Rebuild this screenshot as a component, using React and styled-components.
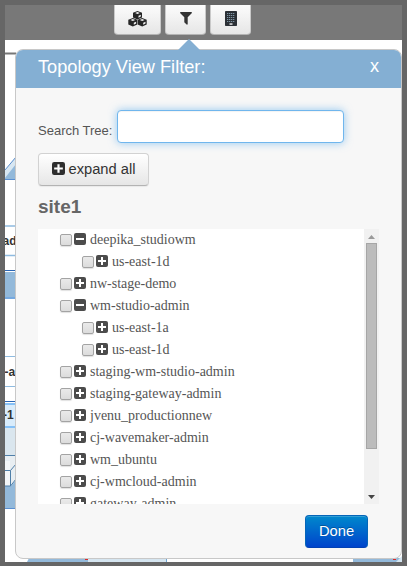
import React from 'react';
import styled, { createGlobalStyle, css } from 'styled-components';

const Global = createGlobalStyle`
  * { box-sizing: border-box; }
  body { margin: 0; font-family: "Liberation Sans", Arial, sans-serif; overflow: hidden; }
`;

const Frame = styled.div`
  position: relative;
  width: 407px;
  height: 566px;
  border: solid #666;
  border-width: 5px 5px 4px;
  background: #fff;
  overflow: hidden;
`;

const Toolbar = styled.div`
  position: relative;
  display: flex;
  align-items: flex-start;
  gap: 4px;
  height: 35px;
  padding-left: 109px;
  background: #787878;
`;

const buttonBase = css`
  display: flex;
  align-items: center;
  justify-content: center;
  padding: 0;
  font-family: inherit;
  border-radius: 4px;
`;

const ToolButton = styled.button`
  ${buttonBase}
  width: ${(p) => p.$width}px;
  height: 30px;
  border: 1px solid #c9c9c9;
  border-top: 0;
  border-bottom-color: #b3b3b3;
  border-radius: 0 0 4px 4px;
  background: linear-gradient(#fcfcfc, #e6e6e6);
  svg { display: block; margin-top: -2px; }
`;

const Diagram = styled.svg`
  position: absolute;
  left: 0;
  top: 0;
  font: bold 12px "Liberation Sans", Arial, sans-serif;
`;

const Popover = styled.section`
  position: absolute;
  left: 10px;
  top: 44px;
  width: 387px;
  height: 510px;
  border: 1px solid #c8c8c8;
  border-radius: 8px;
  background: #f7f7f7;
  &::before {
    content: "";
    position: absolute;
    left: 162px;
    top: -11px;
    border: solid transparent;
    border-width: 0 11px 11px;
    border-bottom-color: #84afd3;
  }
`;

const Header = styled.header`
  display: flex;
  justify-content: space-between;
  height: 38px;
  padding: 0 22px;
  border-radius: 7px 7px 0 0;
  background: #84afd3;
  color: #fff;
`;

const Title = styled.h3`
  margin: 0;
  font-size: 18.2px;
  line-height: 34px;
  font-weight: 400;
`;

const Close = styled.span`
  font-size: 18.2px;
  line-height: 32px;
`;

const Body = styled.div`
  display: flex;
  flex-direction: column;
  align-items: flex-start;
  padding: 22px 22px 0;
`;

const SearchRow = styled.label`
  display: flex;
  align-items: center;
  gap: 4px;
  height: 33px;
  color: #555;
  font-size: 13px;
  span { padding-top: 8px; width: 75px; white-space: nowrap; }
`;

const SearchInput = styled.input`
  width: 227px;
  height: 33px;
  padding: 4px 6px;
  border: 1px solid #70b6ed;
  border-radius: 4px;
  outline: 0;
  background: #fff;
  box-shadow: inset 0 1px 1px rgba(0, 0, 0, .05), 0 0 8px rgba(82, 168, 236, .6);
`;

const ExpandButton = styled.button`
  ${buttonBase}
  gap: 4px;
  width: 111px;
  height: 33px;
  margin-top: 10px;
  padding-bottom: 2px;
  border: 1px solid #d2d2d2;
  border-bottom-color: #b3b3b3;
  background: linear-gradient(#fff, #e6e6e6);
  box-shadow: 0 1px 1px rgba(0, 0, 0, .06);
  color: #333;
  font-size: 14.7px;
`;

const Site = styled.h2`
  margin: 9px 0 0;
  height: 34px;
  color: #666;
  font-size: 19px;
  line-height: 24px;
`;

const TreePane = styled.div`
  display: flex;
  justify-content: space-between;
  width: 341px;
  height: 275px;
  overflow: hidden;
  background: #fff;
`;

const Tree = styled.ul`
  margin: 0;
  padding: 0 0 0 22px;
  list-style: none;
`;

const TreeRow = styled.li`
  display: flex;
  align-items: center;
  height: 22px;
  padding-left: ${(p) => p.$depth * 22}px;
  color: #555;
  font: 14px "Liberation Serif", "Times New Roman", serif;
  white-space: nowrap;
  svg { margin: -2px 4px 0 2px; }
`;

const Check = styled.i`
  width: 12px;
  height: 12px;
  border: 1px solid #a3a3a3;
  border-radius: 2px;
  background: linear-gradient(#eaeaea, #dcdcdc);
  box-shadow: 0 1px 1px rgba(0, 0, 0, .12);
`;

const Scrollbar = styled.div`
  display: flex;
  flex-direction: column;
  align-items: center;
  justify-content: space-between;
  width: 15px;
  height: 275px;
  padding: 6px 0 5px;
  background: #f1f1f1;
  svg { display: block; }
`;

const Thumb = styled.div`
  width: 11px;
  height: 206px;
  margin: 4px 0 auto;
  border: 1px solid #a6a6a6;
  background: #bcbcbc;
`;

const DoneButton = styled.button`
  ${buttonBase}
  align-self: flex-end;
  width: 63px;
  height: 33px;
  margin: 11px 11px 0 0;
  padding-bottom: 2px;
  border: 1px solid #0565b8;
  border-bottom-color: #0241b4;
  background: linear-gradient(#0088cc, #0044cc);
  box-shadow: inset 0 1px 0 rgba(255, 255, 255, .2);
  color: #fff;
  font-size: 14.7px;
  text-shadow: 0 -1px 0 rgba(0, 0, 0, .25);
`;

const ToggleIcon = ({ open, size = 12, color = '#4c4c4c' }) => (
  <svg width={size} height={size} viewBox="0 0 12 12">
    <rect width="12" height="12" rx="2" fill={color} />
    <path d={open ? 'M2 6h8' : 'M2 6h8M6 2v8'} stroke="#fff" strokeWidth="2" />
  </svg>
);

const Cube = ({ x, y }) => (
  <g transform={`translate(${x} ${y})`}>
    <path d="M4.5 0L9 1.7V6.4L4.5 8.5 0 6.4V1.7z" fill="#262626" />
    <path d="M4.5 1.1L6.9 2.1 4.5 3.1 2.1 2.1zM5.5 4.7L7.8 3.8V5.6L5.5 6.7z" fill="#f3f3f3" />
  </g>
);

const CubesIcon = () => (
  <svg width="19" height="16" viewBox="0 0 19 16">
    <Cube x={5} y={0} />
    <Cube x={0.3} y={7} />
    <Cube x={9.7} y={7} />
  </svg>
);

const FilterIcon = () => (
  <svg width="12" height="13" viewBox="0 0 12 13">
    <path d="M.6 0H11.4Q12.2.4 11.7 1.2L7.7 5.3V12Q7.4 13 6.6 12.5L4.5 10.5Q4.3 10.2 4.3 9.8V5.3L.3 1.2Q-.2.4.6 0z" fill="#333" />
  </svg>
);

const BuildingIcon = () => (
  <svg width="12" height="15" viewBox="0 0 12 15">
    <rect width="12" height="15" rx=".7" fill="#2b3036" />
    <path d="M2 2.5h8M2 4.5h8M2 6.5h8M2 8.5h8M2 10.5h8" stroke="#7d95a5" strokeDasharray="1.3 .7" />
    <path d="M4.5 12.3h3v1.5h-3z" fill="#e5e5e5" />
  </svg>
);

const Topology = () => (
  <Diagram width="397" height="557" viewBox="5 5 397 557">
    <path d="M5 53.5h11" stroke="#777" strokeWidth="2" />
    <path d="M5 170L16 156V180H5z" fill="#d8e7f2" />
    <path d="M5 178L16 164V180H5z" fill="#93b9da" />
    <path d="M5 170L16 157M5 179.5h11" stroke="#5b8fd0" fill="none" />
    <path d="M5 226h11M5 255.5h11" stroke="#8fbbe0" strokeWidth="1.5" />
    <path d="M5 270.5h11" stroke="#2a66b5" />
    <path d="M5 272h11v25H5z" fill="#93b9da" />
    <path d="M5 298h11" stroke="#76a9e0" strokeWidth="2" />
    <path d="M5 356.5h11M5 386.5h11" stroke="#8fbbe0" />
    <path d="M5 401.5h11" stroke="#2a66b5" />
    <path d="M5 403h11v24H5z" fill="#d9ecfb" />
    <path d="M5 404h11M5 427h11" stroke="#86c1f7" strokeWidth="2" />
    <path d="M5 428h11v27H5z" fill="#dae6ee" />
    <path d="M5 456h11v52H5z" fill="#e8eef2" />
    <path d="M5 486H11L16 480V508H5z" fill="#93b9da" />
    <path d="M5 461h5v25H5z" fill="#f4f6f7" />
    <path d="M5 455.5h11M5 470.5h5.5V486H5M10.5 470.5L16 464M10.5 486L16 479" stroke="#4f7fa8" fill="none" />
    <path d="M5 508.5h11" stroke="#5b8fd0" />
    <path d="M27 562L29 558H90V562z" fill="#93b9da" />
    <path d="M88 558h79v4H88z" fill="#d5e5f0" />
    <path d="M166.5 558v4" stroke="#6fa5d4" />
    <path d="M353 558h49v4h-49z" fill="#93b9da" />
    <path d="M396 562L402 556V562z" fill="#d5e5f0" />
    <path d="M85 559.5h3M393 559.5h3" stroke="#d92b2b" />
    <g fill="#333">
      <text x="2.5" y="245">ad</text>
      <text x="4.5" y="376">-a</text>
      <text x="3" y="419">-1</text>
    </g>
  </Diagram>
);

const rows = [
  ['deepika_studiowm', 0, true],
  ['us-east-1d', 1],
  ['nw-stage-demo', 0],
  ['wm-studio-admin', 0, true],
  ['us-east-1a', 1],
  ['us-east-1d', 1],
  ['staging-wm-studio-admin', 0],
  ['staging-gateway-admin', 0],
  ['jvenu_productionnew', 0],
  ['cj-wavemaker-admin', 0],
  ['wm_ubuntu', 0],
  ['cj-wmcloud-admin', 0],
  ['gateway-admin', 0],
];

export default function App() {
  return (
    <>
      <Global />
      <Frame>
        <Topology />
        <Toolbar>
          <ToolButton $width={47} aria-label="Clusters"><CubesIcon /></ToolButton>
          <ToolButton $width={41} aria-label="Filter"><FilterIcon /></ToolButton>
          <ToolButton $width={41} aria-label="Sites"><BuildingIcon /></ToolButton>
        </Toolbar>
        <Popover>
          <Header>
            <Title>Topology View Filter:</Title>
            <Close>x</Close>
          </Header>
          <Body>
            <SearchRow>
              <span>Search Tree:</span>
              <SearchInput />
            </SearchRow>
            <ExpandButton><ToggleIcon size={13} color="#2e2e2e" />expand all</ExpandButton>
            <Site>site1</Site>
            <TreePane>
              <Tree>
                {rows.map(([label, depth, open], i) => (
                  <TreeRow key={i} $depth={depth}>
                    <Check />
                    <ToggleIcon open={open} />
                    {label}
                  </TreeRow>
                ))}
              </Tree>
              <Scrollbar>
                <svg width="7" height="4"><path d="M0 4L3.5 0 7 4z" fill="#999" /></svg>
                <Thumb />
                <svg width="7" height="4"><path d="M0 0L3.5 4 7 0z" fill="#444" /></svg>
              </Scrollbar>
            </TreePane>
            <DoneButton>Done</DoneButton>
          </Body>
        </Popover>
      </Frame>
    </>
  );
}
